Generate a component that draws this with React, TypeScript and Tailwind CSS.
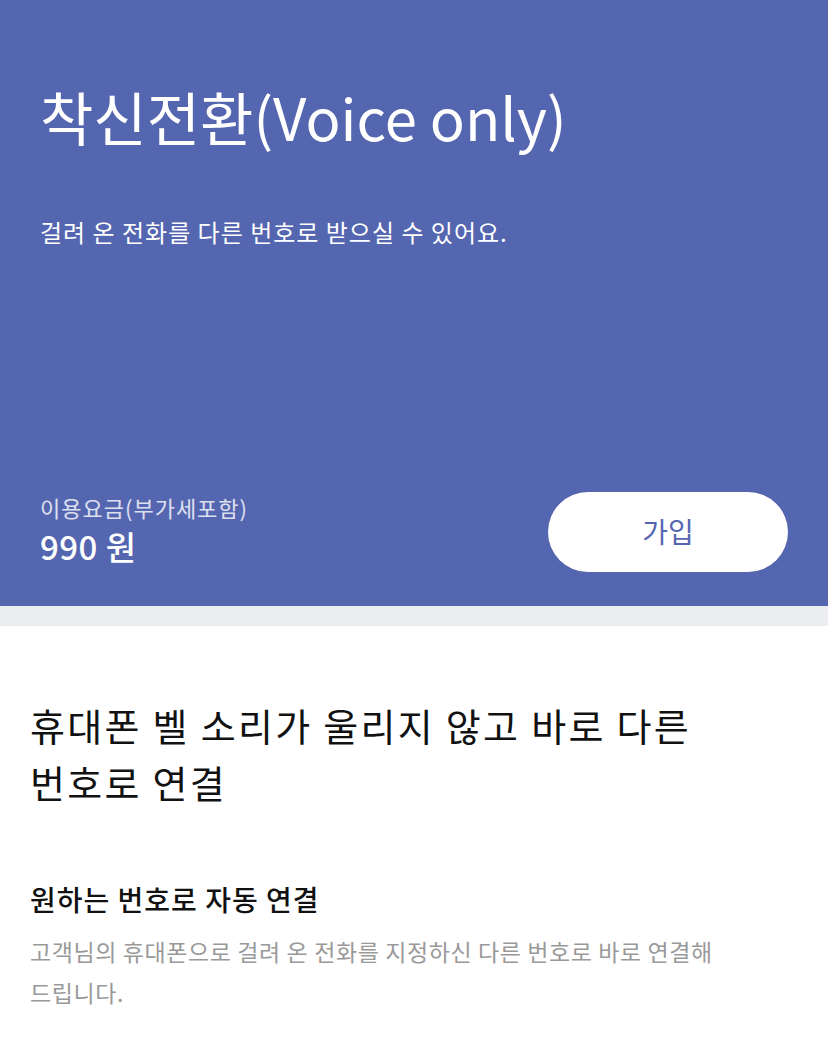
import React from 'react';

const font = { fontFamily: '"Noto Sans CJK KR", "Noto Sans", sans-serif' };

const App = () => {
  return (
    <div className="w-[828px] min-h-[1042px] bg-white" style={font}>
      {/* Hero */}
      <section className="bg-[#5566b0] h-[606px] px-10 flex flex-col">
        <h1 className="pt-[76px] text-[58px] leading-[80px] text-white font-normal">
          착신전환(Voice only)
        </h1>
        <p className="mt-[60px] text-[24px] leading-[32px] text-white tracking-[1px]">
          걸려 온 전화를 다른 번호로 받으실 수 있어요.
        </p>
        <div className="mt-auto mb-[34px] flex items-center justify-between">
          <div className="flex flex-col -mt-[6px]">
            <span className="text-[22px] leading-[30px] text-white/80 tracking-[1px]">이용요금(부가세포함)</span>
            <span className="mt-[4px] text-[33px] leading-[40px] text-white font-medium tracking-[0.5px]">990 원</span>
          </div>
          <button className="w-[240px] h-[80px] rounded-full bg-white text-[#5566b0] text-[28px] leading-[36px] pb-[3px]">
            가입
          </button>
        </div>
      </section>
      <div className="h-5 bg-[#ecedf0]" />

      {/* Detail */}
      <section className="px-[30px] pt-[70px] pb-10">
        <h2 className="w-[720px] break-keep text-[38px] leading-[57px] text-[#111] tracking-[2.3px]">
          휴대폰 벨 소리가 울리지 않고 바로 다른 번호로 연결
        </h2>
        <h3 className="mt-[69px] text-[28px] leading-[40px] text-[#111] font-medium tracking-[1px]">
          원하는 번호로 자동 연결
        </h3>
        <p className="mt-[12px] w-[720px] break-keep text-[23px] leading-[41px] text-[#999] tracking-[0.6px]">
          고객님의 휴대폰으로 걸려 온 전화를 지정하신 다른 번호로 바로 연결해 드립니다.
        </p>
      </section>
    </div>
  );
};

export default App;
